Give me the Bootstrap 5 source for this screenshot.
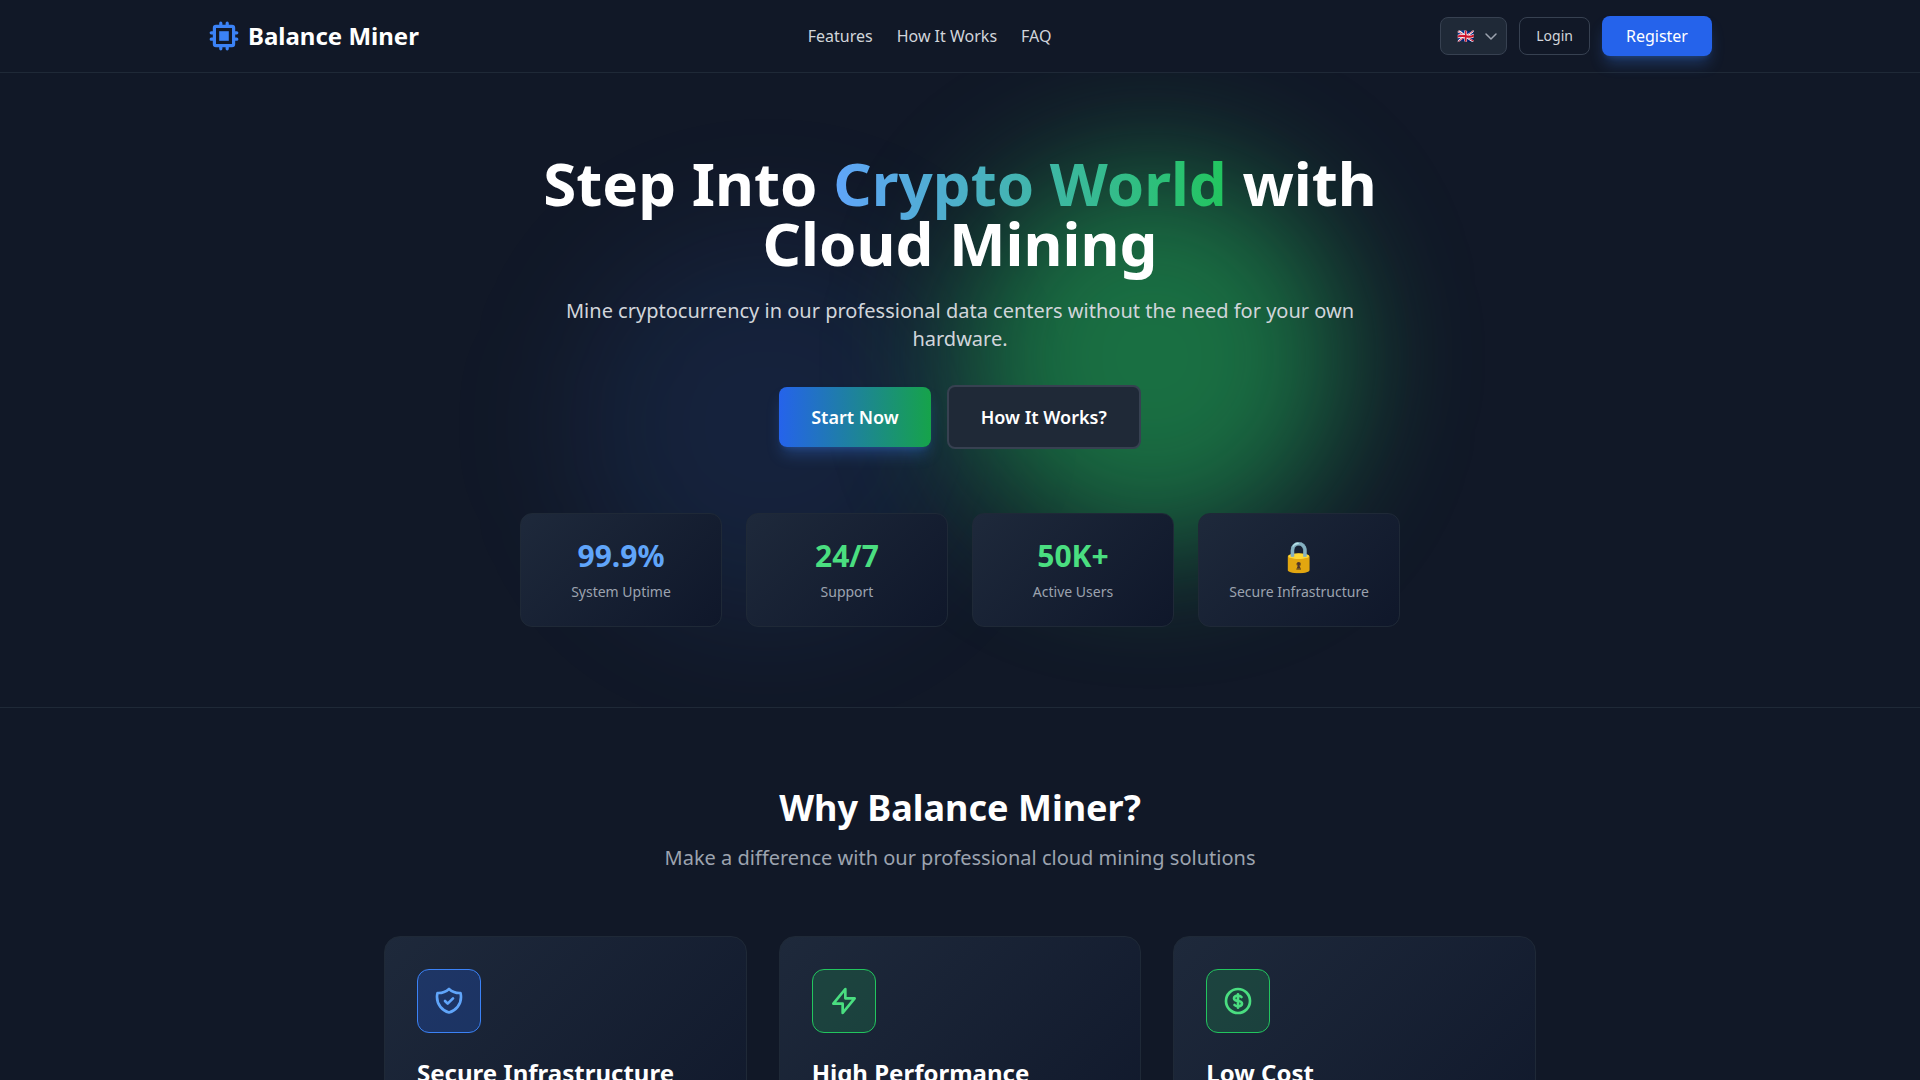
<!DOCTYPE html>
<html lang="en">
<head>
<meta charset="utf-8">
<meta name="viewport" content="width=device-width, initial-scale=1">
<title>Balance Miner</title>
<link href="https://cdn.jsdelivr.net/npm/bootstrap@5.3.0/dist/css/bootstrap.min.css" rel="stylesheet">
<style>
  body { font-family: "Noto Sans", "Noto Color Emoji", sans-serif; background: #111827; color: #fff; font-size: 16px; line-height: 24px; }
  a { text-decoration: none; }
  .site-header { background: #111827; border-bottom: 1px solid #1f2937; position: relative; z-index: 2; }
  .site-bar { max-width: 1536px; padding: 16px; }
  .brand-name { font-size: 24px; line-height: 32px; font-weight: 700; color: #fff; }
  .brand-name svg { color: #3b82f6; }
  .top-links { gap: 24px; }
  .top-links a { color: #d1d5db; }
  .top-actions { gap: 12px; }
  .lang-select { width: 67px; height: 38px; padding: 8px 28px 8px 16px; font-size: 14px; line-height: 20px; color: #d1d5db; border: 1px solid #374151; border-radius: 8px; background-color: #1f2937; background-position: right 7px center; background-size: 16px 12px;
    background-image: url("data:image/svg+xml,%3csvg xmlns='http://www.w3.org/2000/svg' viewBox='0 0 16 12'%3e%3cpath fill='none' stroke='%239ca3af' stroke-width='1.5' stroke-linecap='round' stroke-linejoin='round' d='M3 4l5 5 5-5'/%3e%3c/svg%3e"); }
  .btn-login { font-size: 14px; line-height: 20px; padding: 8px 16px; color: #d1d5db; border: 1px solid #374151; border-radius: 8px; }
  .btn-register { font-size: 16px; line-height: 24px; padding: 8px 24px; color: #fff; background: #2563eb; border: 0; border-radius: 8px; box-shadow: 0 10px 15px -3px rgba(59, 130, 246, .3), 0 4px 6px -4px rgba(59, 130, 246, .3); }
  .hero { padding: 80px 16px; border-bottom: 1px solid #1f2937; }
  .hero-inner { max-width: 880px; position: relative; z-index: 1; }
  .glow { position: absolute; width: 384px; height: 384px; border-radius: 50%; filter: blur(64px); }
  .glow-blue { left: calc(50% - 384px); top: 160px; background: rgba(59, 130, 246, .1); }
  .glow-green { left: 50%; top: 92px; background: rgba(34, 197, 94, .5); }
  .hero-title { font-size: 60px; line-height: 60px; font-weight: 700; margin-bottom: 24px; }
  .hero-accent { background: linear-gradient(90deg, #60a5fa, #22c55e); -webkit-background-clip: text; background-clip: text; color: transparent; }
  .intro { font-size: 20px; line-height: 28px; }
  .hero .intro { color: #d1d5db; margin-bottom: 32px; }
  .hero-btn { font-size: 18px; line-height: 28px; font-weight: 600; padding: 16px 32px; color: #fff; border: 0; border-radius: 8px; }
  .btn-start { background: linear-gradient(90deg, #2563eb, #16a34a); box-shadow: 0 10px 15px -3px rgba(59, 130, 246, .3), 0 4px 6px -4px rgba(59, 130, 246, .3); }
  .btn-how { background: #1f2937; border: 2px solid #374151; }
  .btn:hover { color: #fff; }
  .stats { display: grid; grid-template-columns: repeat(4, 1fr); gap: 24px; margin-top: 64px; }
  .panel { background: linear-gradient(135deg, #1e293b, #0f172a); border: 1px solid #1f2937; }
  .stat { border-radius: 12px; padding: 24px 16px; }
  .stat-value { font-size: 30px; line-height: 36px; font-weight: 700; margin-bottom: 8px; }
  .stat-label { font-size: 14px; line-height: 20px; color: #9ca3af; }
  .tint-blue { color: #60a5fa; }
  .tint-green { color: #4ade80; }
  .features { padding: 80px 16px; }
  .section-title { font-size: 36px; line-height: 40px; font-weight: 700; margin-bottom: 16px; }
  .features .intro { color: #9ca3af; margin-bottom: 64px; }
  .feature-grid { max-width: 1152px; display: grid; grid-template-columns: repeat(3, 1fr); gap: 32px; }
  .feature { border-radius: 16px; padding: 32px; min-height: 270px; }
  .feature-icon { width: 64px; height: 64px; border-radius: 12px; margin-bottom: 24px; border: 1px solid; }
  .feature-icon.tint-blue { background: rgba(37, 99, 235, .25); border-color: #3b82f6; }
  .feature-icon.tint-green { background: rgba(34, 197, 94, .18); border-color: #22c55e; }
  .feature h3 { font-size: 24px; line-height: 32px; font-weight: 700; margin: 0; }
</style>
</head>
<body>
<header class="site-header">
  <div class="site-bar container-fluid d-flex align-items-center justify-content-between">
    <a href="#" class="brand-name d-flex align-items-center gap-2">
      <svg width="32" height="32" viewBox="0 0 20 20" fill="currentColor" aria-hidden="true"><path d="M13 7H7v6h6V7z"/><path fill-rule="evenodd" clip-rule="evenodd" d="M7 2a1 1 0 012 0v1h2V2a1 1 0 112 0v1h2a2 2 0 012 2v2h1a1 1 0 110 2h-1v2h1a1 1 0 110 2h-1v2a2 2 0 01-2 2h-2v1a1 1 0 11-2 0v-1H9v1a1 1 0 11-2 0v-1H5a2 2 0 01-2-2v-2H2a1 1 0 110-2h1V9H2a1 1 0 010-2h1V5a2 2 0 012-2h2V2zM5 5h10v10H5V5z"/></svg>
      <span>Balance Miner</span>
    </a>
    <nav class="top-links d-flex" aria-label="Main">
      <a href="#features">Features</a>
      <a href="#how">How It Works</a>
      <a href="#faq">FAQ</a>
    </nav>
    <div class="top-actions d-flex align-items-center">
      <select class="form-select lang-select" aria-label="Language">
        <option>🇬🇧</option>
      </select>
      <button type="button" class="btn btn-login">Login</button>
      <button type="button" class="btn btn-register">Register</button>
    </div>
  </div>
</header>

<main>
  <section class="hero position-relative overflow-hidden text-center">
    <div class="glow glow-blue"></div>
    <div class="glow glow-green"></div>
    <div class="hero-inner mx-auto">
      <h1 class="hero-title">Step Into <span class="hero-accent">Crypto World</span> with Cloud Mining</h1>
      <p class="intro">Mine cryptocurrency in our professional data centers without the need for your own hardware.</p>
      <div class="d-flex justify-content-center align-items-center gap-3">
        <button type="button" class="btn hero-btn btn-start">Start Now</button>
        <button type="button" class="btn hero-btn btn-how">How It Works?</button>
      </div>
      <div class="stats">
        <div class="panel stat"><div class="stat-value tint-blue">99.9%</div><div class="stat-label">System Uptime</div></div>
        <div class="panel stat"><div class="stat-value tint-green">24/7</div><div class="stat-label">Support</div></div>
        <div class="panel stat"><div class="stat-value tint-green">50K+</div><div class="stat-label">Active Users</div></div>
        <div class="panel stat"><div class="stat-value">🔒</div><div class="stat-label">Secure Infrastructure</div></div>
      </div>
    </div>
  </section>

  <section class="features" id="features">
    <div class="text-center">
      <h2 class="section-title">Why Balance Miner?</h2>
      <p class="intro">Make a difference with our professional cloud mining solutions</p>
    </div>
    <div class="feature-grid mx-auto">
      <article class="panel feature">
        <div class="feature-icon tint-blue d-flex align-items-center justify-content-center">
          <svg width="32" height="32" viewBox="0 0 24 24" fill="none" stroke="currentColor" stroke-width="2" stroke-linecap="round" stroke-linejoin="round" aria-hidden="true"><path d="M9 12l2 2 4-4m5.618-4.016A11.955 11.955 0 0112 2.944a11.955 11.955 0 01-8.618 3.04A12.02 12.02 0 003 9c0 5.591 3.824 10.29 9 11.622 5.176-1.332 9-6.03 9-11.622 0-1.042-.133-2.052-.382-3.016z"/></svg>
        </div>
        <h3>Secure Infrastructure</h3>
      </article>
      <article class="panel feature">
        <div class="feature-icon tint-green d-flex align-items-center justify-content-center">
          <svg width="32" height="32" viewBox="0 0 24 24" fill="none" stroke="currentColor" stroke-width="2" stroke-linecap="round" stroke-linejoin="round" aria-hidden="true"><path d="M13 10V3L4 14h7v7l9-11h-7z"/></svg>
        </div>
        <h3>High Performance</h3>
      </article>
      <article class="panel feature">
        <div class="feature-icon tint-green d-flex align-items-center justify-content-center">
          <svg width="32" height="32" viewBox="0 0 24 24" fill="none" stroke="currentColor" stroke-width="2" stroke-linecap="round" stroke-linejoin="round" aria-hidden="true"><path d="M12 8c-1.657 0-3 .895-3 2s1.343 2 3 2 3 .895 3 2-1.343 2-3 2m0-8c1.11 0 2.08.402 2.599 1M12 8V7m0 1v8m0 0v1m0-1c-1.11 0-2.08-.402-2.599-1M21 12a9 9 0 11-18 0 9 9 0 0118 0z"/></svg>
        </div>
        <h3>Low Cost</h3>
      </article>
    </div>
  </section>
</main>
<script src="https://cdn.jsdelivr.net/npm/bootstrap@5.3.0/dist/js/bootstrap.bundle.min.js"></script>
</body>
</html>
